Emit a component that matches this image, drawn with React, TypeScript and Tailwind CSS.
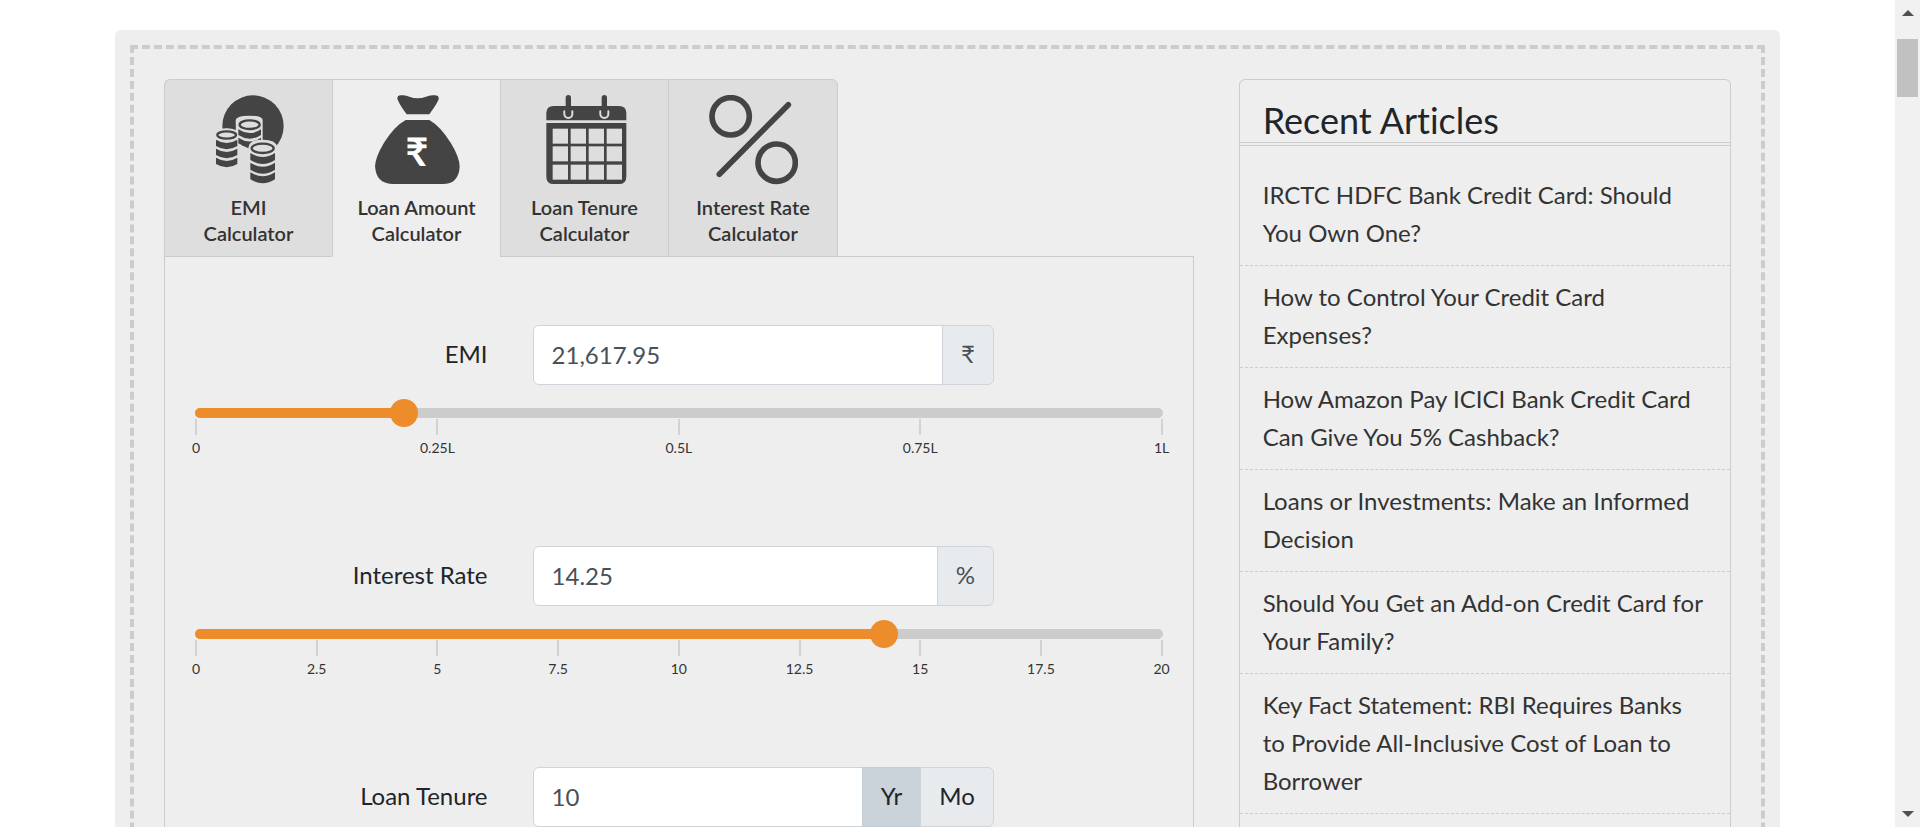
import { useState } from "react";
import type { ReactNode } from "react";

const INK = "#444";

function CoinStack({ x, y, rx, ry, layers, step }: { x: number; y: number; rx: number; ry: number; layers: number; step: number }) {
  const bands = Array.from({ length: layers }, (_, i) => y + 14 + i * step);
  const sag = ry * 1.4;
  const thick = step - 8;
  return (
    <g>
      {bands.map((by) => (
        <path
          key={by}
          d={`M${x - rx} ${by} Q${x} ${by + sag} ${x + rx} ${by} V${by + thick} Q${x} ${by + thick + sag} ${x - rx} ${by + thick} Z`}
          fill={INK}
        />
      ))}
      <ellipse cx={x} cy={y} rx={rx + 1} ry={ry + 5} fill="#dedede" />
      <ellipse cx={x} cy={y} rx={rx - 4} ry={ry - 3} fill="#dedede" stroke={INK} strokeWidth="7" />
    </g>
  );
}

function CoinsIcon() {
  return (
    <svg viewBox="12 30 270 270" className="size-[90px]" aria-hidden="true">
      <circle cx="159" cy="123" r="92" fill={INK} />
      <path d="M107 106 Q107 92 147 92 Q188 92 188 106 V168 Q220 166 228 184 V240 H146 V184 L108 170 Z" fill="#dedede" />
      <path d="M40 150 Q44 130 80 130 Q116 130 116 150 V248 H40 Z" fill="#dedede" />
      <path d="M116 148 L124 180 L150 192 L146 225 H112 Z" fill="#dedede" />
      <CoinStack x={149} y={119} rx={34} ry={16} layers={2} step={25} />
      <path d="M146 186 Q148 164 188 164 Q228 164 232 186 V300 H146 Z" fill="#dedede" />
      <CoinStack x={80} y={150} rx={32} ry={14} layers={3} step={27} />
      <CoinStack x={188} y={190} rx={37} ry={17} layers={3} step={29} />
    </svg>
  );
}

function MoneyBagIcon() {
  return (
    <svg viewBox="816 225 270 270" className="size-[90px]" aria-hidden="true">
      <path d="M892 236 Q892 225 904 226 Q916 224 928 230 Q953 240 978 230 Q990 224 1004 226 Q1018 226 1016 238 Q1012 250 988 283 H920 Q896 250 892 236 Z" fill={INK} />
      <path d="M917 300 H988 Q1020 318 1052 368 Q1079 412 1079 440 Q1076 492 1028 492 H876 Q828 490 825 438 Q826 412 852 368 Q884 318 917 300 Z" fill={INK} />
      <text x="951" y="437" textAnchor="middle" fontSize="118" fontWeight="700" fill="#fff">₹</text>
    </svg>
  );
}

function CalendarIcon() {
  const cols = [187, 241, 295, 349];
  const rows = [206, 259, 314];
  return (
    <svg viewBox="149 105 270 270" className="size-[90px]" aria-hidden="true">
      <path d="M168 181 V160 Q168 138 190 138 H386 Q408 138 408 160 V181 Z" fill={INK} />
      <path d="M168 189 H408 V350 Q408 372 386 372 H190 Q168 372 168 350 Z" fill={INK} />
      {rows.map((y) => cols.map((x) => <rect key={`${x}-${y}`} x={x} y={y} width="46" height="45" fill="#dedede" />))}
      {[234, 342].map((x) => (
        <g key={x} fill="none" strokeLinecap="round">
          <path d={`M${x - 12} 154 V162 A12 12 0 0 0 ${x + 12} 162 V154`} stroke="#dedede" strokeWidth="6" />
          <path d={`M${x} 113 V160`} stroke={INK} strokeWidth="16" />
        </g>
      ))}
    </svg>
  );
}

function PercentIcon() {
  return (
    <svg viewBox="654 105 270 270" className="size-[90px]" aria-hidden="true">
      <g fill="none" stroke={INK} strokeWidth="17" strokeLinecap="round">
        <circle cx="722" cy="169" r="56" />
        <circle cx="860" cy="308" r="56" />
        <path d="M688 343 L895 134" strokeWidth="17" />
      </g>
    </svg>
  );
}

const tabs: { title: string; icon: ReactNode }[] = [
  { title: "EMI", icon: <CoinsIcon /> },
  { title: "Loan Amount", icon: <MoneyBagIcon /> },
  { title: "Loan Tenure", icon: <CalendarIcon /> },
  { title: "Interest Rate", icon: <PercentIcon /> },
];

const articles = [
  "IRCTC HDFC Bank Credit Card: Should You Own One?",
  "How to Control Your Credit Card Expenses?",
  "How Amazon Pay ICICI Bank Credit Card Can Give You 5% Cashback?",
  "Loans or Investments: Make an Informed Decision",
  "Should You Get an Add-on Credit Card for Your Family?",
  "Key Fact Statement: RBI Requires Banks to Provide All-Inclusive Cost of Loan to Borrower",
];

function Slider({ label, value, max, step, ticks, onChange }: {
  label: string;
  value: number;
  max: number;
  step: number;
  ticks: string[];
  onChange: (v: number) => void;
}) {
  return (
    <div className="mt-[23px]">
      <div className="relative h-[10px] rounded-[5px] bg-[#ccc]">
        <div className="h-full rounded-[5px] bg-[#ed8c2b]" style={{ width: `${(value / max) * 100}%` }} />
        <input
          type="range"
          aria-label={label}
          min={0}
          max={max}
          step={step}
          value={value}
          onChange={(e) => onChange(Number(e.target.value))}
          className="absolute -inset-x-[14px] -top-[9px] h-7 cursor-pointer appearance-none bg-transparent [&::-webkit-slider-thumb]:size-7 [&::-webkit-slider-thumb]:appearance-none [&::-webkit-slider-thumb]:rounded-full [&::-webkit-slider-thumb]:bg-[#ed8c2b]"
        />
      </div>
      <div className="mt-px flex justify-between text-[14px] leading-[20px] text-[#333]">
        {ticks.map((t) => (
          <div key={t} className="flex w-[2px] flex-col items-center gap-[3px]">
            <span className="h-4 w-[2px] shrink-0 bg-[#d2d2d4]" />
            <span className="whitespace-nowrap">{t}</span>
          </div>
        ))}
      </div>
    </div>
  );
}

function Field({ id, label, value, onChange, children, slider }: {
  id: string;
  label: string;
  value: string;
  onChange: (v: string) => void;
  children: ReactNode;
  slider?: ReactNode;
}) {
  return (
    <div className="pb-[88px]">
      <div className="grid grid-cols-12 gap-x-[45px]">
        <label htmlFor={id} className="col-span-4 self-center pb-[2px] text-right leading-9">{label}</label>
        <div className="col-span-6 flex h-[60px]">
          <input
            id={id}
            type="text"
            value={value}
            onChange={(e) => onChange(e.target.value)}
            className="min-w-0 flex-1 rounded-l-md border border-[#ced4da] bg-white px-[18px] text-[#495057] outline-none"
          />
          {children}
        </div>
      </div>
      {slider}
    </div>
  );
}

function Addon({ children }: { children: ReactNode }) {
  return (
    <span className="-ml-px flex items-center rounded-r-md border border-[#ced4da] bg-[#e7ebee] px-[18px] pb-[2px] text-[#495057]">{children}</span>
  );
}

export default function App() {
  const [active, setActive] = useState("Loan Amount");
  const [emi, setEmi] = useState("21,617.95");
  const [rate, setRate] = useState("14.25");
  const [tenure, setTenure] = useState("10");
  const [unit, setUnit] = useState("Yr");
  const num = (s: string) => Number(s.replace(/,/g, "")) || 0;

  return (
    <div className="flex h-screen overflow-hidden bg-white font-['Lato','Noto_Sans',sans-serif] text-[24px] text-[#212529] [font-variant-ligatures:none]">
      <main className="min-w-0 flex-1 px-[115px] pt-[30px]">
        <div className="rounded-md bg-[#eee] p-[15px]">
          <div className="grid grid-cols-3 gap-[45px] border-4 border-dashed border-[#ccc] p-[30px]">
            <section className="col-span-2">
              <div role="tablist" className="relative -mb-px flex">
                {tabs.map((t) => {
                  const on = t.title === active;
                  return (
                    <button
                      key={t.title}
                      type="button"
                      role="tab"
                      aria-selected={on}
                      onClick={() => setActive(t.title)}
                      className={`flex h-[178px] w-[168px] flex-col items-center border-t border-b border-l border-[#ccc] pt-[15px] text-[20px] leading-[26px] font-semibold text-[#333] first:rounded-tl-md last:w-[170px] last:rounded-tr-md last:border-r ${on ? "border-b-[#eee] bg-[#eee]" : "bg-[#dedede]"}`}
                    >
                      {t.icon}
                      <span className="mt-[9px]">
                        {t.title}
                        <br />
                        Calculator
                      </span>
                    </button>
                  );
                })}
              </div>
              <div role="tabpanel" className="border border-[#ccc] px-[30px] pt-[68px]">
                <Field
                  id="emi"
                  label="EMI"
                  value={emi}
                  onChange={setEmi}
                  slider={
                    <Slider label="EMI slider" value={num(emi)} max={100000} step={0.01} ticks={["0", "0.25L", "0.5L", "0.75L", "1L"]} onChange={(v) => setEmi(v.toLocaleString("en-IN"))} />
                  }
                >
                  <Addon>₹</Addon>
                </Field>
                <Field
                  id="rate"
                  label="Interest Rate"
                  value={rate}
                  onChange={setRate}
                  slider={
                    <Slider label="Interest rate slider" value={num(rate)} max={20} step={0.25} ticks={["0", "2.5", "5", "7.5", "10", "12.5", "15", "17.5", "20"]} onChange={(v) => setRate(String(v))} />
                  }
                >
                  <Addon>%</Addon>
                </Field>
                <Field id="tenure" label="Loan Tenure" value={tenure} onChange={setTenure}>
                  {["Yr", "Mo"].map((u) => (
                    <button
                      key={u}
                      type="button"
                      aria-pressed={unit === u}
                      onClick={() => setUnit(u)}
                      className={`-ml-px border px-[18px] pb-[2px] last:rounded-r-md ${unit === u ? "border-[#c4cdd4] bg-[#cad3da]" : "border-[#ced4da] bg-[#e7ebee]"}`}
                    >
                      {u}
                    </button>
                  ))}
                </Field>
              </div>
            </section>
            <aside className="rounded-md border border-[#ccc]">
              <h2 className="border-b-4 border-double border-[#ccc] px-[23px] pt-[18px] text-[36px] leading-[44px]">Recent Articles</h2>
              <ul className="pt-[18px]">
                {articles.map((a) => (
                  <li key={a} className="border-b border-dashed border-[#ccc] px-[23px] pt-[12px] pb-[13px] leading-[38px]">
                    <a href="#" className="text-[#333]">{a}</a>
                  </li>
                ))}
              </ul>
            </aside>
          </div>
        </div>
      </main>
      <div className="flex w-[25px] flex-col items-center justify-between bg-[#f1f1f1] py-[10px]" aria-hidden="true">
        <div className="flex flex-col items-center gap-[23px]">
          <svg viewBox="0 0 12 6" className="h-[6px] w-3"><path d="M0 6 L6 0 L12 6 Z" fill="#505050" /></svg>
          <div className="h-[58px] w-[21px] bg-[#c1c1c1]" />
        </div>
        <svg viewBox="0 0 12 6" className="h-[6px] w-3"><path d="M0 0 L6 6 L12 0 Z" fill="#505050" /></svg>
      </div>
    </div>
  );
}
